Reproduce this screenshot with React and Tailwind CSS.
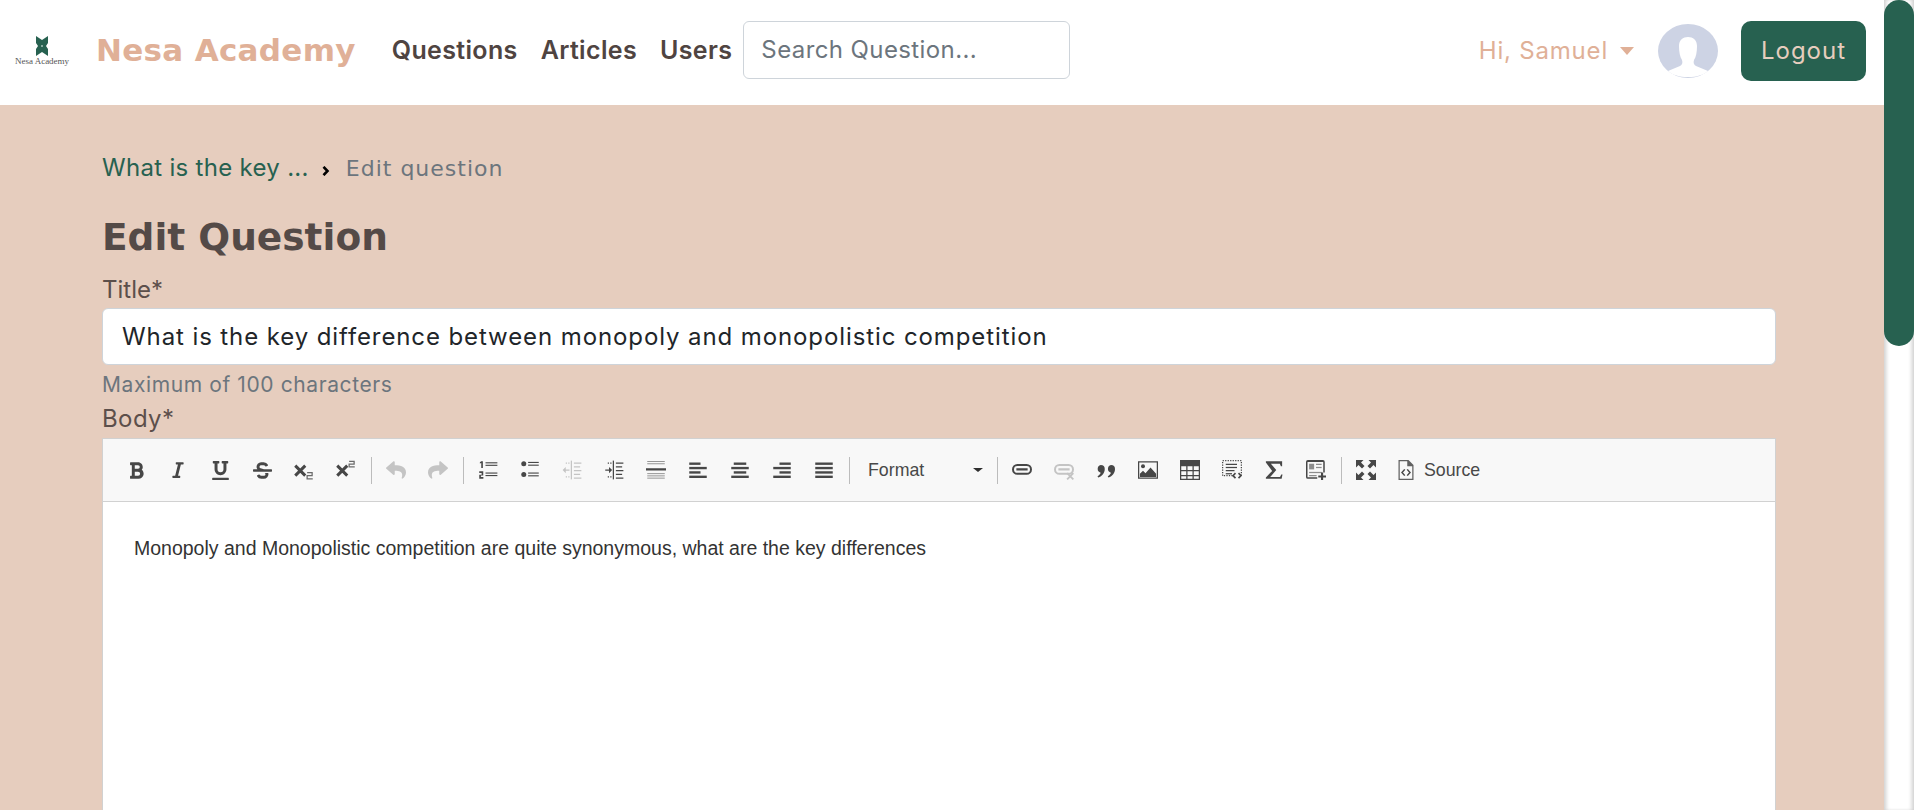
import React from 'react';
import { FaBold, FaItalic, FaUnderline, FaStrikethrough, FaReply, FaShare } from 'react-icons/fa';

const Icon = ({ children, muted }) => (
  <svg viewBox="0 0 16 16" className={`w-5 h-5 ${muted ? 'text-[#c4c4c4]' : 'text-[#474747]'}`} fill="currentColor">
    {children}
  </svg>
);

// stacked bars for the list and align icons
const Bars = ({ rows, h = 1.5 }) => rows.map(([x, y, w], i) => <rect key={i} x={x} y={y} width={w} height={h} />);

const ScriptIcon = ({ sup }) => (
  <Icon>
    <path d="M1 4.5 9 12.5M9 4.5 1 12.5" fill="none" stroke="currentColor" strokeWidth="2.4" />
    <path
      d={sup ? 'M10.5 1h4v2.2h-4v2.3h4.5' : 'M10.5 10h4v2.5h-4V15H15'}
      fill="none"
      stroke="currentColor"
      strokeWidth="1"
      opacity="0.8"
    />
  </Icon>
);

const NumberedList = () => (
  <Icon>
    <Bars h={0.9} rows={[[6, 1.8, 9.5], [6, 3.8, 9.5], [6, 10, 9.5], [6, 12, 9.5]]} />
    <path d="M2.6 1h1.3v5.4H2.6V2.4l-1.1.3V1.8zM1 9h3.2v3.4H2.3v1.2h2V15H1v-3.2h1.9v-1.4H1z" />
  </Icon>
);

const BulletList = () => (
  <Icon>
    <circle cx="3" cy="3" r="2" />
    <circle cx="3" cy="11.5" r="2" />
    <Bars h={0.9} rows={[[6.5, 1.5, 8.5], [6.5, 3.7, 8.5], [6.5, 10, 8.5], [6.5, 12.2, 8.5]]} />
  </Icon>
);

const IndentIcon = ({ out, muted }) => (
  <Icon muted={muted}>
    <rect x="7" y="0.5" width="1" height="15" />
    <Bars h={1} rows={[[9.5, 2, 6], [9.5, 5, 5], [9.5, 8, 6], [9.5, 11, 5], [9.5, 14, 6]]} />
    <Bars h={1} rows={[[3, 2, 1], [5, 2, 1], [3, 13, 1], [5, 13, 1]]} />
    {out ? <path d="M0.5 8 3 5.5v2h3v1H3v2z" /> : <path d="M6.5 8 4 5.5v2H1v1h3v2z" />}
  </Icon>
);

const HorizontalRule = () => (
  <Icon>
    <g opacity="0.55">
      <Bars h={0.8} rows={[[1, -1, 14], [1, 0.8, 14], [1, 2.6, 14], [1, 10.5, 14], [1, 12.3, 14], [1, 14.1, 14]]} />
    </g>
    <rect x="0" y="6.6" width="16" height="1.8" />
  </Icon>
);

const AlignIcon = ({ rows }) => (
  <Icon>
    <Bars h={1.9} rows={rows} />
  </Icon>
);

const LinkIcon = ({ muted, cross }) => (
  <Icon muted={muted}>
    <rect x="0.8" y="4" width="14.4" height="7" rx="3.5" fill="none" stroke="currentColor" strokeWidth="1.6" />
    <rect x="3.5" y="6.6" width="9" height="1.8" />
    {cross && <path d="M10.5 10.5 15.5 15.5M15.5 10.5 10.5 15.5" stroke="currentColor" strokeWidth="1.5" />}
  </Icon>
);

const QuoteIcon = () => (
  <Icon>
    <path d="M3.8 4a3.2 3.2 0 0 1 3.2 3.2c0 3.200-2 5.800-5.200 6.800l-.6-1c1.400-.8 2.300-1.900 2.500-2.800A3.200 3.200 0 0 1 3.800 4zM12 4a3.200 3.200 0 0 1 3.200 3.200c0 3.200-2 5.800-5.200 6.800l-.6-1c1.400-.8 2.300-1.900 2.500-2.800A3.200 3.200 0 0 1 12 4z" />
  </Icon>
);

const ImageIcon = () => (
  <Icon>
    <path fillRule="evenodd" d="M0 1h16v14H0zM1 2v12h14V2z" />
    <circle cx="4" cy="5" r="1.6" />
    <path d="M1.5 13.500v-2.500L4 8.500l2 2 4-4.500 4.500 5v2.500z" />
  </Icon>
);

const TableIcon = () => (
  <Icon>
    <path fillRule="evenodd" d="M0 0h16v16H0zM1 5v3h4V5zm5 0v3h4V5zm5 0v3h4V5zM1 9v3h4V9zm5 0v3h4V9zm5 0v3h4V9zM1 13v2h4v-2zm5 0v2h4v-2zm5 0v2h4v-2z" />
  </Icon>
);

const TemplateSnippet = () => (
  <Icon>
    <rect x="0.5" y="0.5" width="15" height="12" fill="none" stroke="currentColor" strokeDasharray="1 1" />
    <Bars h={1} rows={[[3, 3, 9], [3, 5.500, 9], [3, 8, 7], [3, 10.500, 5]]} />
    <circle cx="12" cy="12.500" r="3.200" fill="#f8f8f8" />
    <path d="M10.800 10.500 8.800 12.500l2 2M13.200 10.500l2 2-2 2" fill="none" stroke="currentColor" strokeWidth="1.300" />
  </Icon>
);

const Sigma = () => (
  <Icon>
    <path d="M1.500 1h13v4h-1l-.8-2H5.500l4.300 5-4.800 5.500h7.800l1-2h1l-.7 3.500H1.500v-1L6.500 8.700 1.500 2z" />
  </Icon>
);

const Templates = () => (
  <Icon>
    <path fillRule="evenodd" d="M1.500 0h12A1.500 1.500 0 0 1 15 1.500V10h-1.200V1.500H1.200V13.800H9V15H1.500A1.500 1.500 0 0 1 0 13.500v-12A1.500 1.500 0 0 1 1.500 0z" />
    <g opacity="0.6">
      <rect x="2.500" y="3" width="4" height="4.500" />
      <Bars h={1} rows={[[8, 3, 4.500], [8, 5.500, 4.500], [2.500, 9.500, 10], [2.500, 12, 6]]} />
    </g>
    <path d="M12 10h1.700v2.300H16V14h-2.300v2H12v-2H9.800v-1.700H12z" />
  </Icon>
);

const Maximize = () => (
  <Icon>
    <path d="M0 0h6L4 2l2.800 2.800-2 2L2 4 0 6zM16 0v6l-2-2-2.800 2.800-2-2L12 2l-2-2zM0 16v-6l2 2 2.800-2.800 2 2L4 14l2 2zM16 16h-6l2-2-2.800-2.800 2-2L14 12l2-2z" />
  </Icon>
);

const SourceIcon = () => (
  <Icon>
    <path fillRule="evenodd" d="M2 0h8l4 4v12H2zM3 1v14h10V5H9V1z" opacity="0.85" />
    <path d="M7 7.500 4.800 10 7 12.500M9 7.500l2.200 2.500L9 12.500" fill="none" stroke="currentColor" strokeWidth="1.200" />
  </Icon>
);

const Btn = ({ children }) => <div className="w-[42px] h-[42px] flex items-center justify-center shrink-0">{children}</div>;
const FaIcon = ({ as: Cmp, muted, size = 17 }) => <Cmp size={size} className={muted ? 'text-[#c4c4c4]' : 'text-[#474747]'} />;
const Sep = () => <div className="w-px h-[27px] mx-[3.5px] bg-[#bcbcbc] shrink-0" />;

const Toolbar = () => (
  <div className="h-[63px] bg-[#f8f8f8] border-b border-[#d1d1d1] flex items-center pl-[12px] font-['Liberation_Sans',sans-serif]">
    <Btn><FaIcon as={FaBold} size={19} /></Btn>
    <Btn><FaIcon as={FaItalic} size={18} /></Btn>
    <Btn><FaIcon as={FaUnderline} size={19} /></Btn>
    <Btn><FaIcon as={FaStrikethrough} size={19} /></Btn>
    <Btn><ScriptIcon /></Btn>
    <Btn><ScriptIcon sup /></Btn>
    <Sep />
    <Btn><FaIcon as={FaReply} muted size={20} /></Btn>
    <Btn><FaIcon as={FaShare} muted size={20} /></Btn>
    <Sep />
    <Btn><NumberedList /></Btn>
    <Btn><BulletList /></Btn>
    <Btn><IndentIcon out muted /></Btn>
    <Btn><IndentIcon /></Btn>
    <Btn><HorizontalRule /></Btn>
    <Btn><AlignIcon rows={[[1, 2, 9], [1, 5.500, 14], [1, 9, 9], [1, 12.500, 14]]} /></Btn>
    <Btn><AlignIcon rows={[[3, 2, 10], [1, 5.500, 14], [3, 9, 10], [1, 12.500, 14]]} /></Btn>
    <Btn><AlignIcon rows={[[6, 2, 9], [1, 5.500, 14], [6, 9, 9], [1, 12.500, 14]]} /></Btn>
    <Btn><AlignIcon rows={[[1, 2, 14], [1, 5.500, 14], [1, 9, 14], [1, 12.500, 14]]} /></Btn>
    <Sep />
    <div className="w-[140px] flex items-center justify-between pl-[15px] pr-[10px] shrink-0">
      <span className="text-[17.75px] text-[#484848]">Format</span>
      <span className="w-0 h-0 border-x-[5px] border-x-transparent border-t-[4px] border-t-[#2f2f2f]" />
    </div>
    <Sep />
    <Btn><LinkIcon /></Btn>
    <Btn><LinkIcon muted cross /></Btn>
    <Btn><QuoteIcon /></Btn>
    <Btn><ImageIcon /></Btn>
    <Btn><TableIcon /></Btn>
    <Btn><TemplateSnippet /></Btn>
    <Btn><Sigma /></Btn>
    <Btn><Templates /></Btn>
    <Sep />
    <Btn><Maximize /></Btn>
    <div className="flex items-center gap-[8px] pl-[9px]">
      <SourceIcon />
      <span className="text-[17.75px] text-[#484848]">Source</span>
    </div>
  </div>
);

const Avatar = () => (
  <svg viewBox="0 0 60 54" className="w-[60px] h-[54px]">
    <ellipse cx="30" cy="27" rx="30" ry="27" fill="#cdd3e4" />
    <path d="M10 47 22 42c2-1 3-3 2-6-2-3-3-8-3-14 0-6 4-9 9-9s9 3 9 9c0 6-1 11-3 14-1 3 0 5 2 6l12 5c-5 4-11 6-20 6s-15-2-20-6z" fill="#fff" />
  </svg>
);

const App = () => {
  return (
    <div className="h-screen w-full flex overflow-hidden font-[Inter,sans-serif]">
      <div className="flex-1 min-w-0 flex flex-col bg-[#e6cdbe]">
        {/* Navbar */}
        <nav className="h-[105px] shrink-0 bg-white flex items-center pl-[15px] pr-[18px] pb-[4px]">
          <div className="w-[54px] flex flex-col items-center shrink-0">
            <svg viewBox="0 0 12 20" className="w-[12px] h-[20px]">
              <path d="M0 0 6 4 12 0V7L10 10 12 13V20L6 16 0 20V13L2 10 0 7z" fill="#276150" />
              <circle cx="6" cy="10" r="1" fill="#a8c4ba" />
            </svg>
            <span className="text-[9px] leading-[10px] text-[#555] whitespace-nowrap font-['Liberation_Serif',serif]">Nesa Academy</span>
          </div>
          <span className="ml-[27px] text-[31px] font-bold tracking-[0.3px] text-[#e0b097] whitespace-nowrap font-['DejaVu_Sans',sans-serif]">Nesa Academy</span>
          <div className="ml-[36px] flex items-center gap-[23px] text-[25px] font-semibold tracking-[0.35px] text-[#4f4441]">
            <span>Questions</span>
            <span>Articles</span>
            <span>Users</span>
          </div>
          <input
            placeholder="Search Question..."
            className="ml-[11px] mb-[2px] w-[327px] h-[58px] px-[17px] bg-white border border-[#ced4da] rounded-[6px] text-[24px] tracking-[0.4px] placeholder:text-[#6c757d] outline-none"
          />
          <div className="ml-auto flex items-center">
            <span className="text-[24px] tracking-[0.8px] text-[#e0b097]">Hi, Samuel</span>
            <span className="ml-[12px] w-0 h-0 border-x-[7px] border-x-transparent border-t-[8px] border-t-[#e0b097]" />
            <div className="ml-[24px]"><Avatar /></div>
            <button className="ml-[23px] w-[125px] h-[60px] rounded-[10px] bg-[#276150] text-[#e6cdbe] text-[24px] tracking-[1px]">Logout</button>
          </div>
        </nav>

        {/* Form */}
        <main className="flex-1 min-h-0 overflow-hidden pl-[102px] pr-[108px]">
          <div className="mt-[47px] h-[32px] flex items-center">
            <span className="text-[24px] tracking-[0.3px] text-[#276150]">What is the key ...</span>
            <svg viewBox="0 0 8 10" className="ml-[13px] mt-[5px] w-[8px] h-[10px]">
              <path d="M1.500 0.800 5.500 5 1.500 9.200" fill="none" stroke="#000" strokeWidth="2.600" />
            </svg>
            <span className="ml-[16px] text-[22px] tracking-[1px] text-[#6c757d] font-['DejaVu_Sans',sans-serif]">Edit question</span>
          </div>
          <h1 className="mt-[28px] h-[50px] flex items-center text-[37.5px] font-bold text-[#544a47] font-['DejaVu_Sans',sans-serif]">Edit Question</h1>
          <label className="mt-[13px] block h-[30px] leading-[30px] text-[24px] text-[#5c4f4b]">Title*</label>
          <input
            defaultValue="What is the key difference between monopoly and monopolistic competition"
            className="mt-[3px] block w-full h-[57px] px-[19px] bg-white border border-[#ced4da] rounded-[6px] text-[24px] tracking-[0.9px] text-[#212529] outline-none"
          />
          <div className="mt-[5px] h-[30px] leading-[30px] text-[21px] tracking-[0.6px] text-[#6c757d]">Maximum of 100 characters</div>
          <label className="mt-[4px] block h-[30px] leading-[30px] text-[24px] tracking-[0.4px] text-[#5c4f4b]">Body*</label>
          <div className="mt-[4px] bg-white border border-[#d1d1d1] h-[600px]">
            <Toolbar />
            <p className="pt-[33px] pl-[31px] text-[19.5px] leading-[26px] text-[#333] font-['Liberation_Sans',sans-serif]">
              Monopoly and Monopolistic competition are quite synonymous, what are the key differences
            </p>
          </div>
        </main>
      </div>

      {/* Scrollbar */}
      <div className="w-[30px] shrink-0 bg-white shadow-[inset_4px_0_4px_-2px_#ccc,inset_-4px_0_4px_-2px_#ccc]">
        <div className="h-[346px] bg-[#276150] rounded-[15px]" />
      </div>
    </div>
  );
};

export default App;
